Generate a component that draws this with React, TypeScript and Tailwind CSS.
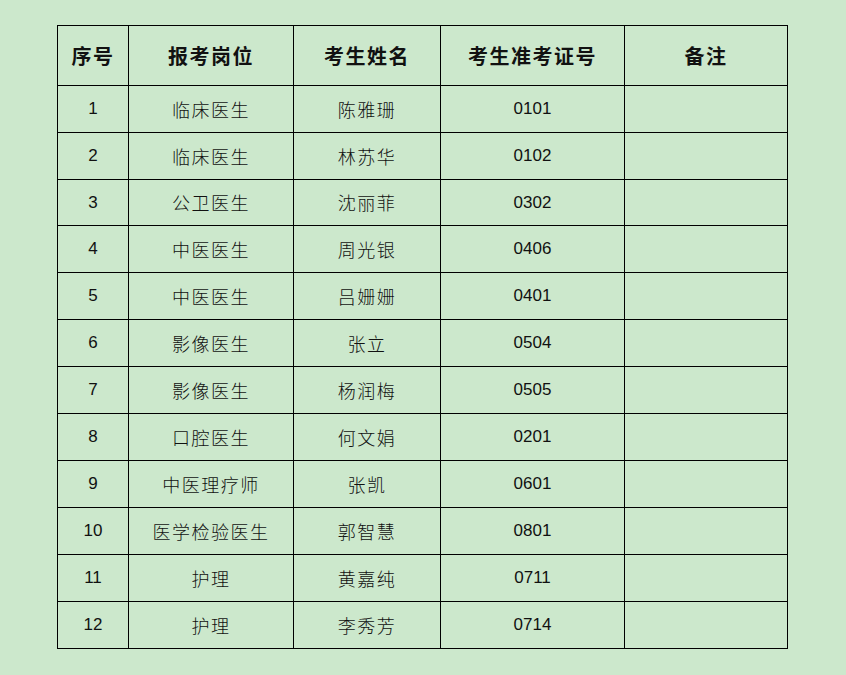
import React from "react";

const rows: [string, string, string, string][] = [
  ["1", "临床医生", "陈雅珊", "0101"],
  ["2", "临床医生", "林苏华", "0102"],
  ["3", "公卫医生", "沈丽菲", "0302"],
  ["4", "中医医生", "周光银", "0406"],
  ["5", "中医医生", "吕姗姗", "0401"],
  ["6", "影像医生", "张立", "0504"],
  ["7", "影像医生", "杨润梅", "0505"],
  ["8", "口腔医生", "何文娟", "0201"],
  ["9", "中医理疗师", "张凯", "0601"],
  ["10", "医学检验医生", "郭智慧", "0801"],
  ["11", "护理", "黄嘉纯", "0711"],
  ["12", "护理", "李秀芳", "0714"],
];

const cjk = "font-['Noto_Sans_CJK_SC','Noto_Sans',sans-serif]";
const num = "font-['Liberation_Sans',sans-serif]";

export default function App() {
  return (
    <div className="w-full h-[675px] bg-[#cce8cc] pt-[25px] pl-[57px]">
      <table className="w-[730px] table-fixed border-collapse text-[#111]">
        <colgroup>
          <col className="w-[71px]" />
          <col className="w-[165px]" />
          <col className="w-[147px]" />
          <col className="w-[184px]" />
          <col className="w-[163px]" />
        </colgroup>
        <thead>
          <tr className="h-[60px]">
            {["序号", "报考岗位", "考生姓名", "考生准考证号", "备注"].map((h) => (
              <th
                key={h}
                className={`border border-black p-0 text-center align-middle text-[20px] tracking-[1.5px] font-bold ${cjk}`}
              >
                {h}
              </th>
            ))}
          </tr>
        </thead>
        <tbody>
          {rows.map((r, i) => (
            <tr key={r[0]} className={i === 2 ? "h-[46px]" : "h-[47px]"}>
              <td className={`border border-black p-0 text-center align-middle text-[17px] ${num}`}>{r[0]}</td>
              <td className={`border border-black p-0 text-center align-middle text-[18px] tracking-[1.5px] font-light ${cjk}`}>{r[1]}</td>
              <td className={`border border-black p-0 text-center align-middle text-[18px] tracking-[1.5px] font-light ${cjk}`}>{r[2]}</td>
              <td className={`border border-black p-0 text-center align-middle text-[17px] ${num}`}>{r[3]}</td>
              <td className="border border-black p-0"></td>
            </tr>
          ))}
        </tbody>
      </table>
    </div>
  );
}
